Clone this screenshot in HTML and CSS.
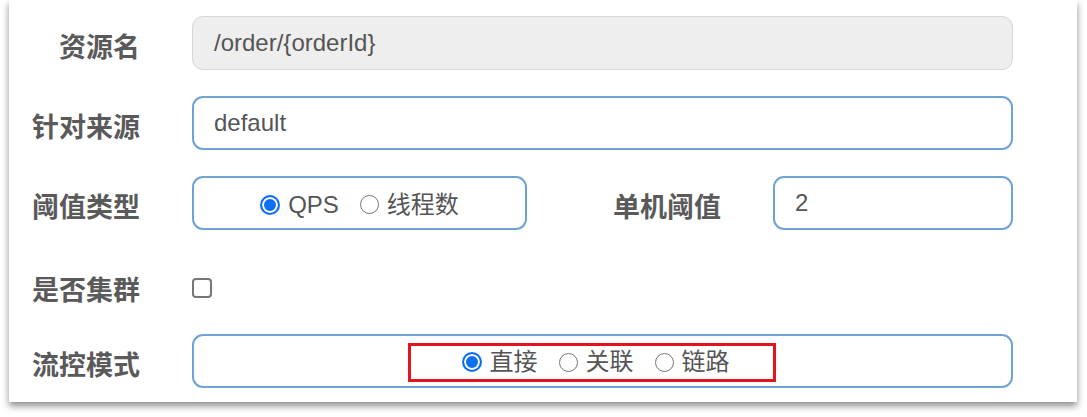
FILE: index.html
```html
<!DOCTYPE html>
<html lang="zh">
<head>
<meta charset="utf-8">
<title>流控规则</title>
<link rel="stylesheet" href="styles.css">
</head>
<body>
<div class="page">
  <div class="card">
    <div class="row">
      <div class="lbl">资源名</div>
      <div class="field readonly">/order/{orderId}</div>
    </div>
    <div class="row">
      <div class="lbl">针对来源</div>
      <div class="field">default</div>
    </div>
    <div class="row">
      <div class="lbl">阈值类型</div>
      <div class="split">
        <div class="field radio-box">
          <span class="radio on"></span><span class="opt">QPS</span>
          <span class="radio"></span><span class="opt">线程数</span>
        </div>
        <div class="lbl sub">单机阈值</div>
        <div class="field small">2</div>
      </div>
    </div>
    <div class="row short">
      <div class="lbl">是否集群</div>
      <div class="check-cell"><span class="checkbox"></span></div>
    </div>
    <div class="row">
      <div class="lbl">流控模式</div>
      <div class="field centered">
        <div class="highlight">
          <span class="radio on"></span><span class="opt">直接</span>
          <span class="radio"></span><span class="opt">关联</span>
          <span class="radio"></span><span class="opt">链路</span>
        </div>
      </div>
    </div>
  </div>
</div>
</body>
</html>
```

FILE: styles.css
```css
* { box-sizing: border-box; }
html, body { margin: 0; padding: 0; background: #ffffff; }
body {
  font-family: "Liberation Sans", "Noto Sans CJK SC", sans-serif;
  color: #555555;
}
.page { padding: 0 10px 15px 9px; }
.card {
  background: #ffffff;
  width: 1068px;
  padding: 16px 64px 14px 0;
  display: flex;
  flex-direction: column;
  gap: 26px;
  box-shadow: 0 4px 7px rgba(0, 0, 0, 0.45);
}
.row {
  display: grid;
  grid-template-columns: 131px 821px;
  column-gap: 52px;
  height: 54px;
  align-items: center;
}
.row.short { height: 52px; align-items: start; }
.lbl {
  text-align: right;
  font-weight: bold;
  font-size: 27px;
  color: #5a5a5a;
  white-space: nowrap;
  padding-top: 4px;
}
.row.short .lbl { padding-top: 13px; }
.field {
  height: 54px;
  border: 2px solid #6fa2d6;
  border-radius: 11px;
  padding: 0 20px;
  font-size: 24px;
  color: #555555;
  display: flex;
  align-items: center;
}
.field.readonly {
  background: #eeeeee;
  border: 1.5px solid #d6d6d6;
  padding-left: 21px;
}
.split {
  display: flex;
  align-items: center;
  height: 54px;
}
.radio-box {
  width: 335px;
  justify-content: center;
  padding: 3px 0 0;
}
.sub { flex: 1; }
.field.small { width: 240px; margin-left: 52px; }
.field.centered { justify-content: center; padding: 2px 0 0; }
.highlight {
  display: flex;
  align-items: center;
  height: 39px;
  border: 3px solid #e5131d;
  padding: 0 43px 0 51px;
  margin-right: 22px;
}
.radio {
  width: 19px;
  height: 19px;
  border-radius: 50%;
  border: 1.5px solid #777777;
  background: #ffffff;
  margin-right: 8px;
  flex: none;
}
.radio.on {
  border: 2px solid #0f6ff0;
  background: #0f6ff0;
  box-shadow: inset 0 0 0 2px #ffffff;
  width: 20px;
  height: 20px;
}
.opt { margin-right: 21px; line-height: 1; }
.opt:last-child { margin-right: 0; }
.check-cell { padding-top: 22px; }
.checkbox {
  display: block;
  width: 20px;
  height: 20px;
  border: 2px solid #767676;
  border-radius: 4px;
  background: #ffffff;
}
```
